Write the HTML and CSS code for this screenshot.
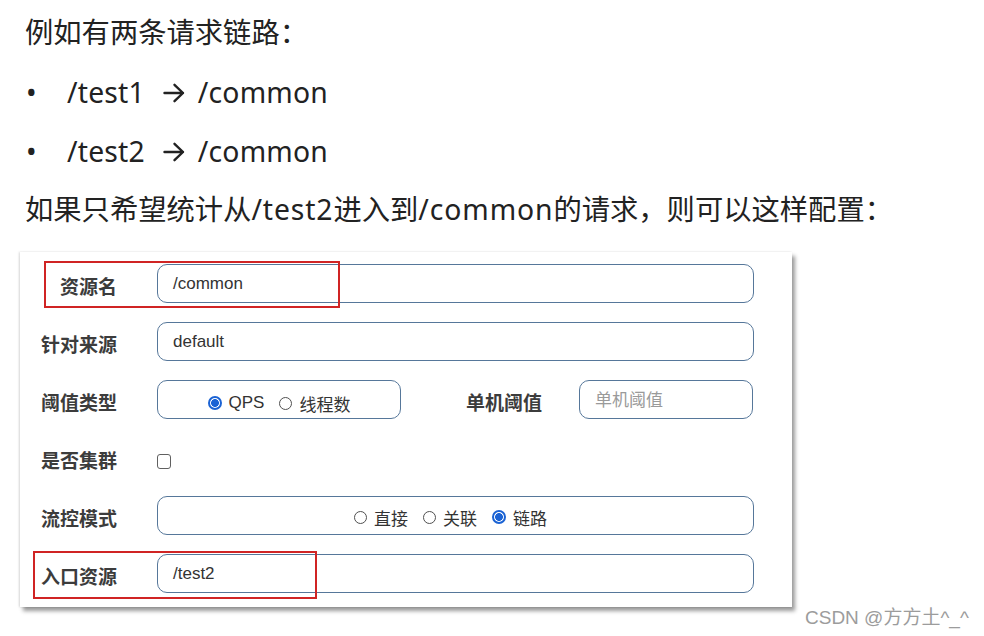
FILE: index.html
```html
<!DOCTYPE html>
<html lang="zh-CN">
<head>
<meta charset="utf-8">
<title>链路流控配置</title>
<link rel="stylesheet" href="styles.css">
</head>
<body>
<div class="page">
  <div class="intro">
    <p class="line">例如有两条请求链路：</p>
    <ul class="chain">
      <li><span class="dot">•</span><span class="lat">/test1</span><svg class="arrow" width="22" height="20" viewBox="0 0 22 20"><path d="M1.5 10 H20 M11.5 1.8 L20 10 L11.5 18.2" fill="none" stroke="#222" stroke-width="2.4" stroke-linecap="round" stroke-linejoin="round"/></svg><span class="lat">/common</span></li>
      <li><span class="dot">•</span><span class="lat">/test2</span><svg class="arrow" width="22" height="20" viewBox="0 0 22 20"><path d="M1.5 10 H20 M11.5 1.8 L20 10 L11.5 18.2" fill="none" stroke="#222" stroke-width="2.4" stroke-linecap="round" stroke-linejoin="round"/></svg><span class="lat">/common</span></li>
    </ul>
    <p class="line">如果只希望统计从<span class="lat">/test2</span>进入到<span class="lat">/common</span>的请求，则可以这样配置：</p>
  </div>

  <div class="card">
    <div class="row">
      <span class="lbl">资源名</span>
      <div class="field">/common</div>
      <div class="mark mark-top"></div>
    </div>
    <div class="row">
      <span class="lbl">针对来源</span>
      <div class="field">default</div>
    </div>
    <div class="row">
      <span class="lbl">阈值类型</span>
      <div class="field choice qps">
        <span class="radio"><span class="circle on"></span>QPS</span>
        <span class="radio"><span class="circle"></span>线程数</span>
      </div>
      <span class="lbl lbl-inline">单机阈值</span>
      <div class="field small placeholder">单机阈值</div>
    </div>
    <div class="row">
      <span class="lbl">是否集群</span>
      <span class="checkbox"></span>
    </div>
    <div class="row">
      <span class="lbl">流控模式</span>
      <div class="field choice mode">
        <span class="radio"><span class="circle"></span>直接</span>
        <span class="radio"><span class="circle"></span>关联</span>
        <span class="radio"><span class="circle on"></span>链路</span>
      </div>
    </div>
    <div class="row">
      <span class="lbl">入口资源</span>
      <div class="field">/test2</div>
      <div class="mark mark-bottom"></div>
    </div>
  </div>

  <div class="watermark">CSDN @方方土^_^</div>
</div>
</body>
</html>
```

FILE: styles.css
```css
body {
  margin: 0;
  background: #ffffff;
}

.page {
  position: relative;
  width: 984px;
  height: 636px;
  overflow: hidden;
  font-family: "Noto Sans", "Noto Sans CJK SC", sans-serif;
  color: #222222;
}

.intro {
  padding: 3px 0 0 25px;
}

.line {
  margin: 0;
  height: 59px;
  font-size: 28.3px;
  line-height: 59px;
  white-space: nowrap;
}

.lat {
  letter-spacing: 0.9px;
}

.chain {
  list-style: none;
  margin: 0;
  padding: 0;
}

.chain li {
  display: flex;
  align-items: center;
  height: 59px;
  font-size: 28.3px;
}

.chain .lat {
  letter-spacing: 0.2px;
}

.dot {
  width: 42px;
  padding-left: 1px;
  box-sizing: border-box;
}

.arrow {
  margin: 2px 13px 0 18px;
}

.card {
  margin: 13px 0 0 20px;
  width: 772px;
  box-sizing: border-box;
  padding: 12px 38px 14px 0;
  display: flex;
  flex-direction: column;
  gap: 19px;
  background: #ffffff;
  box-shadow: 3px 4px 4px rgba(0, 0, 0, 0.4), -1px 0 2px rgba(0, 0, 0, 0.15);
}

.row {
  position: relative;
  display: flex;
  align-items: center;
  height: 39px;
}

.lbl {
  flex: none;
  width: 97px;
  margin-right: 40px;
  text-align: right;
  font-family: "Noto Sans CJK SC", sans-serif;
  font-weight: 700;
  font-size: 19px;
  color: #3c3c3c;
  padding-top: 3px;
}

.lbl-inline {
  width: auto;
  margin: 0 37px 0 65px;
}

.field {
  flex: 1;
  height: 39px;
  box-sizing: border-box;
  border: 1px solid #56779a;
  border-radius: 10px;
  display: flex;
  align-items: center;
  padding-left: 15px;
  font-family: "Liberation Sans", "Noto Sans CJK SC", sans-serif;
  font-size: 17px;
  color: #333333;
}

.field.small {
  flex: none;
  width: 174px;
}

.placeholder {
  color: #9a9a9a;
  padding-bottom: 3px;
}

.choice {
  justify-content: center;
  padding-left: 0;
}

.qps {
  flex: none;
  width: 244px;
  padding-top: 7px;
}

.mode {
  padding-right: 10px;
  padding-top: 3px;
}

.radio {
  display: inline-flex;
  align-items: center;
  gap: 7px;
  color: #333333;
}

.radio + .radio {
  margin-left: 15px;
}

.circle {
  width: 13px;
  height: 13px;
  box-sizing: border-box;
  border: 1.5px solid #505050;
  border-radius: 50%;
  background: #ffffff;
}

.circle.on {
  width: 14px;
  height: 14px;
  border: 2px solid #1b63d4;
  background: radial-gradient(circle, #1b63d4 0 3.6px, #ffffff 4.2px);
}

.checkbox {
  width: 14px;
  height: 15px;
  box-sizing: border-box;
  border: 1.5px solid #606060;
  border-radius: 3px;
  margin-top: 7px;
}

.mark {
  position: absolute;
  box-sizing: border-box;
  border: 2px solid #d02424;
}

.mark-top {
  left: 24px;
  top: -3px;
  width: 296px;
  height: 47px;
}

.mark-bottom {
  left: 13px;
  top: -3px;
  width: 284px;
  height: 48px;
}

.watermark {
  position: absolute;
  left: 805px;
  top: 602px;
  font-family: "Liberation Sans", "Noto Sans CJK SC", sans-serif;
  font-size: 19px;
  color: #9c9c9c;
  white-space: nowrap;
}
```
